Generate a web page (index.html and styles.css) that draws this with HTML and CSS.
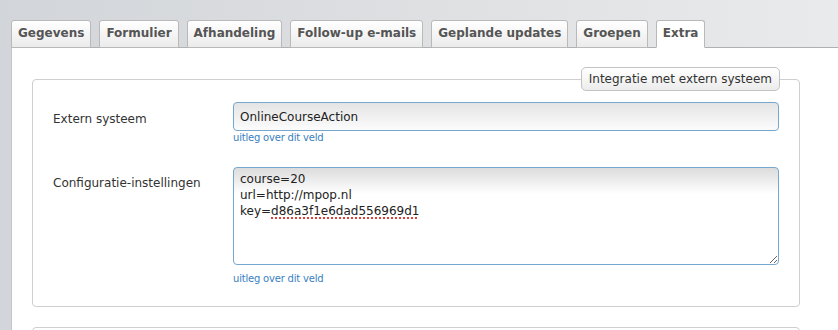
FILE: index.html
```html
<!DOCTYPE html>
<html lang="nl">
<head>
<meta charset="utf-8">
<title>Extra</title>
<link rel="stylesheet" href="styles.css">
</head>
<body>
<div class="page">
  <nav class="tabs">
    <a class="tab">Gegevens</a>
    <a class="tab">Formulier</a>
    <a class="tab">Afhandeling</a>
    <a class="tab">Follow-up e-mails</a>
    <a class="tab">Geplande updates</a>
    <a class="tab">Groepen</a>
    <a class="tab tab--active">Extra</a>
  </nav>
  <div class="panel">
    <fieldset class="group">
      <legend class="legend">Integratie met extern systeem</legend>
      <div class="row">
        <label class="label label--input">Extern systeem</label>
        <div class="field">
          <input class="input" type="text" value="OnlineCourseAction">
          <a class="help">uitleg over dit veld</a>
        </div>
      </div>
      <div class="row row--next">
        <label class="label label--area">Configuratie-instellingen</label>
        <div class="field">
          <div class="area">course=20<br>url=http://mpop.nl<br>key=<span class="misspelled">d86a3f1e6dad556969d1</span></div>
          <a class="help help--area">uitleg over dit veld</a>
        </div>
      </div>
    </fieldset>
    <fieldset class="group group--next"></fieldset>
  </div>
</div>
</body>
</html>
```

FILE: styles.css
```css
html, body {
  margin: 0;
  padding: 0;
  height: 100%;
}

body {
  font-family: "DejaVu Sans", Verdana, sans-serif;
  font-size: 12px;
  color: #333;
  background: linear-gradient(to right, #d2d5d9, #e9eaeb);
  overflow: hidden;
}

.page {
  padding: 20px 0 0 11px;
}

.tabs {
  display: flex;
  gap: 8px;
  position: relative;
  z-index: 1;
  margin-bottom: -1px;
}

.tab {
  display: block;
  font-weight: bold;
  font-size: 12px;
  line-height: 15px;
  color: #555;
  padding: 5px 6px 6px;
  border: 1px solid #b9b9b9;
  border-radius: 3px 3px 0 0;
  background: linear-gradient(#ffffff, #ebebeb);
}

.tab--active {
  background: #fff;
  border-bottom-color: #fff;
}

.panel {
  background: #fff;
  border-top: 1px solid #b0b0b0;
  border-left: 1px solid #c4c6c9;
  padding: 19px 38px 40px 20px;
  min-height: 300px;
}

.group {
  margin: 0;
  border: 1px solid #cfcfcf;
  border-radius: 4px;
  padding: 11px 20px 21px;
}

.legend {
  margin-left: auto;
  margin-right: -1px;
  padding: 4px 7px;
  line-height: 14px;
  font-size: 12px;
  color: #333;
  border: 1px solid #c2c2c2;
  border-radius: 5px;
  background: linear-gradient(#ffffff, #ececec);
}

.row {
  display: grid;
  grid-template-columns: 180px 1fr;
}

.row--next {
  margin-top: 23px;
}

.label {
  line-height: 14px;
  color: #333;
}

.label--input {
  padding-top: 10px;
}

.label--area {
  padding-top: 9px;
}

.field {
  display: flex;
  flex-direction: column;
  align-items: flex-start;
}

.input {
  box-sizing: border-box;
  width: 100%;
  height: 29px;
  margin: 0;
  padding: 0 6px;
  font-family: "DejaVu Sans", Verdana, sans-serif;
  font-size: 12px;
  color: #222;
  border: 1px solid #76a7cf;
  border-radius: 4px;
  background: linear-gradient(#e4e4e4, #fbfbfb 26px);
  outline: none;
}

.area {
  box-sizing: border-box;
  width: 100%;
  height: 98px;
  padding: 3px 6px;
  line-height: 16px;
  font-size: 12px;
  color: #222;
  border: 1px solid #76a7cf;
  border-radius: 4px;
  background: linear-gradient(#dcdcdc, #ffffff 26px);
  overflow: auto;
  resize: both;
}

.misspelled {
  text-decoration: underline dotted #e0413a;
  text-decoration-thickness: 2px;
  text-underline-offset: 2px;
}

.help {
  margin-top: 1px;
  font-size: 10px;
  line-height: 12px;
  color: #3a7fc1;
  letter-spacing: -0.2px;
}

.help--area {
  margin-top: 8px;
}

.group--next {
  margin-top: 20px;
  height: 60px;
  padding: 0;
}
```
